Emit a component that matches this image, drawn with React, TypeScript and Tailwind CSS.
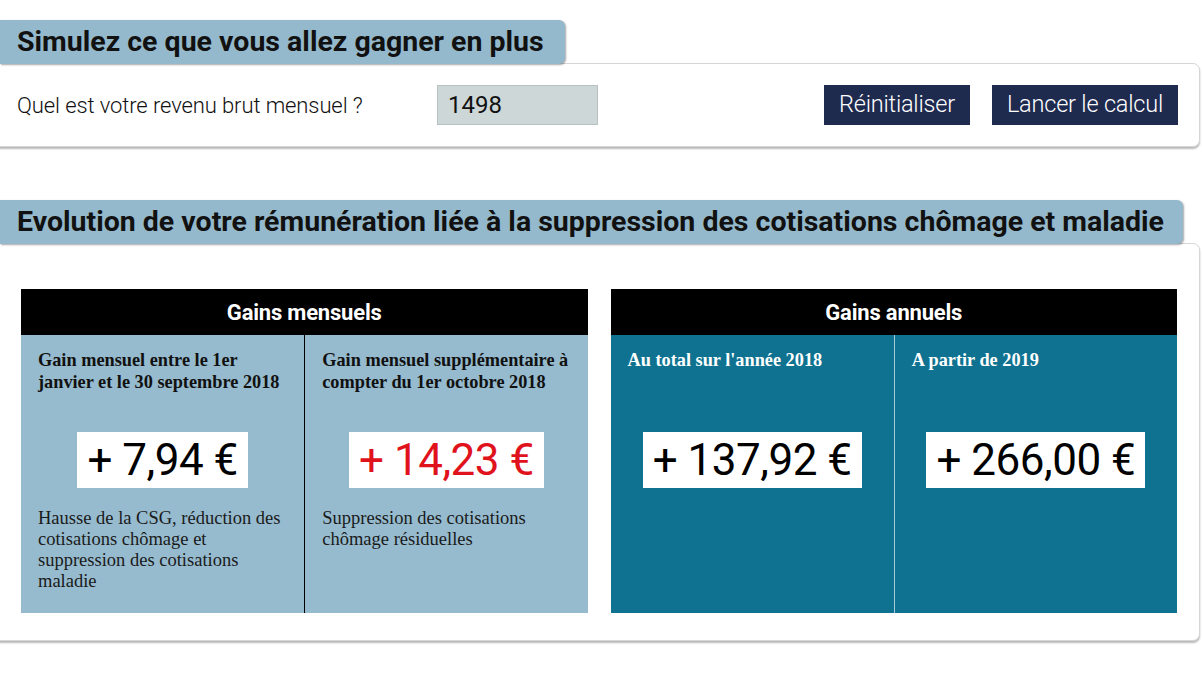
import React from 'react';

const roboto = { fontFamily: 'Roboto, "Liberation Sans", sans-serif' };
const serif = { fontFamily: '"Liberation Serif", "Times New Roman", serif' };

type Cell = {
  title: string;
  value: string;
  note?: string;
  red?: boolean;
};

const monthly: Cell[] = [
  {
    title: 'Gain mensuel entre le 1er janvier et le 30 septembre 2018',
    value: '+ 7,94 €',
    note: 'Hausse de la CSG, réduction des cotisations chômage et suppression des cotisations maladie',
  },
  {
    title: 'Gain mensuel supplémentaire à compter du 1er octobre 2018',
    value: '+ 14,23 €',
    note: 'Suppression des cotisations chômage résiduelles',
    red: true,
  },
];

const yearly: Cell[] = [
  { title: "Au total sur l'année 2018", value: '+ 137,92 €' },
  { title: 'A partir de 2019', value: '+ 266,00 €' },
];

function SectionTab({ children, width }: { children: React.ReactNode; width: string }) {
  return (
    <div
      className={`relative z-10 ${width} h-[44px] flex items-center pl-[17px] bg-[#94b9cc] rounded-r-[6px] shadow-[1px_1px_2px_rgba(0,0,0,0.35)] font-bold text-[28.5px] text-[#111] whitespace-nowrap`}
      style={roboto}
    >
      {children}
    </div>
  );
}

function GainsTable({ heading, cells, dark }: { heading: string; cells: Cell[]; dark?: boolean }) {
  return (
    <div className="flex-1 flex flex-col">
      <div className="h-[46px] bg-black flex items-center justify-center text-white font-bold text-[22px] tracking-[-0.2px]" style={roboto}>
        {heading}
      </div>
      <div className={`h-[278px] grid grid-cols-2 ${dark ? 'bg-[#0e7290]' : 'bg-[#96bbce]'}`}>
        {cells.map((c, i) => (
          <div
            key={c.title}
            className={`pl-[17px] pr-[12px] pt-[15px] flex flex-col ${i === 1 ? (dark ? 'border-l border-[#a9cbd8]' : 'border-l border-black') : ''}`}
          >
            <div className={`h-[82px] font-bold text-[18.3px] leading-[21.5px] ${dark ? 'text-white' : 'text-[#111]'}`} style={serif}>
              {c.title}
            </div>
            <div className="flex justify-center pr-[5px]">
              <div
                className={`h-[56px] px-[10px] bg-white flex items-center text-[44px] tracking-[-0.5px] whitespace-nowrap ${c.red ? 'text-[#e0121c]' : 'text-black'}`}
                style={roboto}
              >
                {c.value}
              </div>
            </div>
            {c.note && (
              <div className="mt-[20px] pr-[5px] text-[18.5px] leading-[21px] text-[#1a1a1a]" style={serif}>
                {c.note}
              </div>
            )}
          </div>
        ))}
      </div>
    </div>
  );
}

export default function App() {
  return (
    <div className="w-[1202px] h-[676px] bg-white overflow-hidden pt-[20px] pr-[2px]" style={roboto}>
      {/* ── Simulation ── */}
      <SectionTab width="w-[565px]">Simulez ce que vous allez gagner en plus</SectionTab>
      <div className="-mt-[1px] -ml-[10px] h-[84px] pl-[26px] pr-[21px] flex items-center bg-white border border-[#d6d6d6] rounded-r-[7px] shadow-[0_2px_2px_rgba(0,0,0,0.28)]">
        <span className="w-[420px] text-[22px] font-light text-[#111] tracking-[-0.1px]">Quel est votre revenu brut mensuel ?</span>
        <div className="w-[161px] h-[40px] bg-[#cdd7d7] border border-[#b9c2c2] flex items-center pl-[10px] text-[24px] text-[#111]">
          1498
        </div>
        <div className="flex-1" />
        <button type="button" className="h-[40px] px-[15px] bg-[#1f2a4f] text-white text-[23.5px] font-light tracking-[-0.2px]">
          Réinitialiser
        </button>
        <button type="button" className="ml-[22px] h-[40px] px-[15px] bg-[#1f2a4f] text-white text-[23.5px] font-light tracking-[-0.2px]">
          Lancer le calcul
        </button>
      </div>

      {/* ── Results ── */}
      <div className="mt-[53px]">
        <SectionTab width="w-[1183px]">Evolution de votre rémunération liée à la suppression des cotisations chômage et maladie</SectionTab>
        <div className="-mt-[1px] -ml-[10px] pl-[30px] pr-[22px] pt-[45px] pb-[27px] flex gap-[23px] bg-white border border-[#d6d6d6] rounded-r-[7px] shadow-[0_2px_2px_rgba(0,0,0,0.28)]">
          <GainsTable heading="Gains mensuels" cells={monthly} />
          <GainsTable heading="Gains annuels" cells={yearly} dark />
        </div>
      </div>
    </div>
  );
}
